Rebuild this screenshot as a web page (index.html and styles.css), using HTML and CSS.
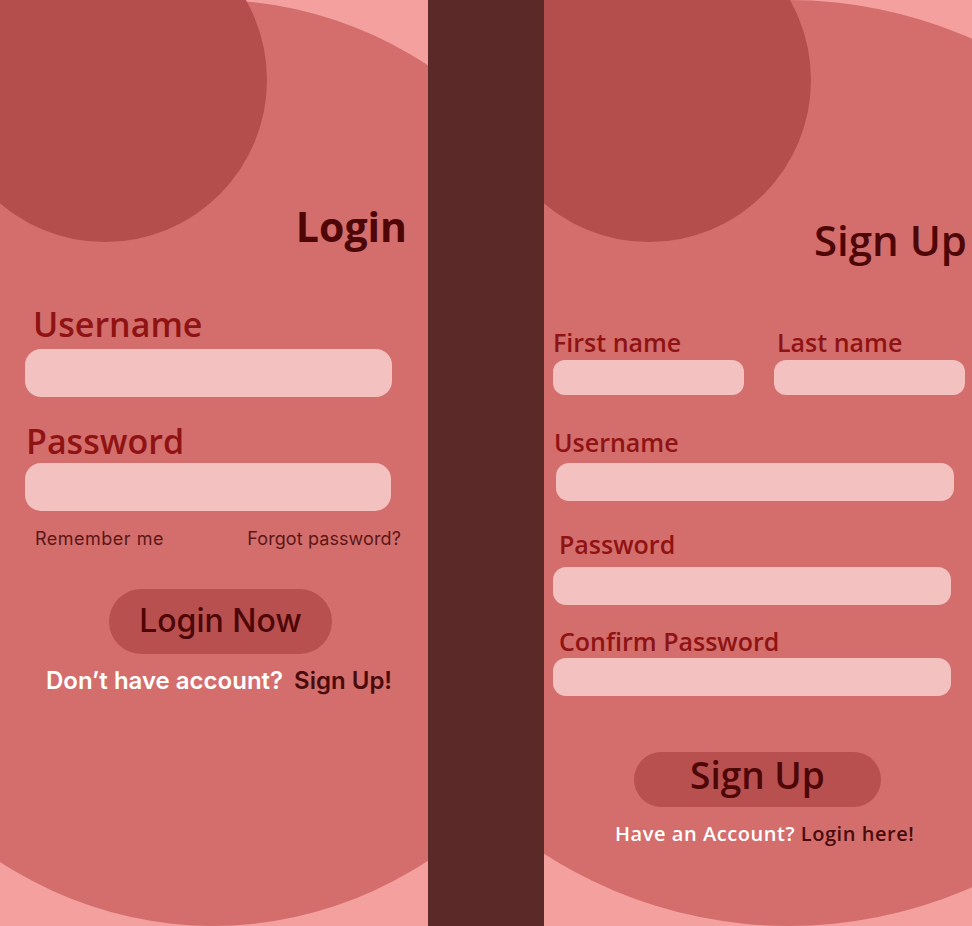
FILE: index.html
```html
<!DOCTYPE html>
<html lang="en">
<head>
<meta charset="utf-8">
<title>Login / Sign Up</title>
<link rel="stylesheet" href="styles.css">
</head>
<body>
<div class="screens">
  <section class="panel panel-login">
    <div class="blob blob-login"></div>
    <div class="dot"></div>
    <form class="content">
      <h1 class="title login-title">Login</h1>
      <label class="big-label lbl-user">Username</label>
      <input class="field field-user" type="text">
      <label class="big-label lbl-pass">Password</label>
      <input class="field field-pass" type="password">
      <div class="options">
        <span>Remember me</span>
        <span>Forgot password?</span>
      </div>
      <button type="button" class="btn btn-login">Login Now</button>
      <p class="alt alt-login"><span class="light">Don’t have account?</span><span class="dark">Sign Up!</span></p>
    </form>
  </section>

  <div class="divider"></div>

  <section class="panel panel-signup">
    <div class="blob blob-signup"></div>
    <div class="dot"></div>
    <form class="content">
      <h1 class="title signup-title">Sign Up</h1>
      <div class="names">
        <div class="name-col name-first">
          <label class="small-label">First name</label>
          <input class="field field-name" type="text">
        </div>
        <div class="name-col name-last">
          <label class="small-label lbl-last">Last name</label>
          <input class="field field-name" type="text">
        </div>
      </div>
      <label class="small-label s-user">Username</label>
      <input class="field field-wide f-user" type="text">
      <label class="small-label s-pass">Password</label>
      <input class="field field-wide f-pass" type="password">
      <label class="small-label s-confirm">Confirm Password</label>
      <input class="field field-wide f-confirm" type="password">
      <button type="button" class="btn btn-signup">Sign Up</button>
      <p class="alt alt-signup"><span class="light">Have an Account?</span> <span class="dark">Login here!</span></p>
    </form>
  </section>
</div>
</body>
</html>
```

FILE: styles.css
```css
* { box-sizing: border-box; }
html, body { margin: 0; padding: 0; }
body { width: 972px; height: 926px; overflow: hidden; background: #f3a09f; }

.screens { display: flex; width: 972px; height: 926px; }

.panel {
  position: relative;
  width: 428px;
  height: 926px;
  flex: 0 0 428px;
  overflow: hidden;
  background: #f3a09f;
}
.divider { flex: 0 0 116px; height: 926px; background: #5c2929; }

.blob { position: absolute; top: 0; height: 926px; border-radius: 50%; background: #d36e6d; }
.blob-login { left: -207px; width: 840px; }
.blob-signup { left: -212px; width: 914px; }
.dot {
  position: absolute;
  left: -57px; top: -82px;
  width: 324px; height: 324px;
  border-radius: 50%;
  background: #b44e4d;
}

.content { position: relative; z-index: 1; display: flex; flex-direction: column; align-items: flex-start; margin: 0; }
.panel-login .content { padding-top: 202px; }
.panel-signup .content { padding-top: 215px; }

.title { margin: 0; align-self: stretch; text-align: right; color: #4e0606; font-family: "Open Sans", sans-serif; }
.login-title { font-size: 41px; line-height: 48px; font-weight: 700; padding-right: 21px; }
.signup-title { font-size: 42px; line-height: 50px; font-weight: 600; padding-right: 5px; }

.big-label, .small-label { display: block; color: #8f1313; font-family: "Open Sans", sans-serif; font-weight: 600; }
.big-label { font-size: 34px; line-height: 40px; }
.small-label { font-size: 25px; line-height: 30px; }

.field {
  display: block;
  border: 0;
  outline: none;
  padding: 0;
  background: #f2c1c0;
  -webkit-appearance: none;
  appearance: none;
}

.lbl-user { margin-top: 54px; padding-left: 33px; }
.field-user { margin: 5px 0 0 25px; width: 367px; height: 48px; border-radius: 16px; }
.lbl-pass { margin-top: 24px; padding-left: 26px; }
.field-pass { margin: 2px 0 0 25px; width: 366px; height: 48px; border-radius: 16px; }

.options {
  align-self: stretch;
  display: flex;
  justify-content: space-between;
  margin-top: 17px;
  padding: 0 27px 0 35px;
  font-family: "Inter", sans-serif;
  font-size: 18px;
  line-height: 22px;
  color: #5c1616;
}
.options span:first-child { letter-spacing: 0.5px; }
.options span:last-child { letter-spacing: 0.1px; }

.btn {
  display: flex;
  align-items: center;
  justify-content: center;
  border: 0;
  padding: 0;
  border-radius: 40px;
  background: #b85050;
  color: #4e0606;
  cursor: pointer;
}
.btn-login { margin: 39px 0 0 109px; width: 223px; height: 65px; font-family: "Inter", sans-serif; font-weight: 500; font-size: 32px; padding-bottom: 2px; }
.btn-signup { margin: 56px 0 0 90px; width: 247px; height: 55px; font-family: "Open Sans", sans-serif; font-weight: 600; font-size: 37px; border-radius: 28px; padding-bottom: 10px; }

.alt { margin: 0; white-space: nowrap; }
.alt .light { color: #ffffff; }
.alt .dark { color: #4a0b0b; }
.alt-login {
  margin-top: 13px;
  padding-left: 46px;
  display: flex;
  gap: 11px;
  font-family: "Inter", sans-serif;
  font-weight: 600;
  font-size: 24px;
  line-height: 28px;
}
.alt-signup {
  margin-top: 15px;
  padding-left: 71px;
  font-family: "Open Sans", sans-serif;
  font-weight: 600;
  font-size: 20px;
  letter-spacing: 0.55px;
  line-height: 24px;
}

.names { display: flex; margin-top: 62px; }
.name-col { display: flex; flex-direction: column; width: 191px; }
.name-first { margin-left: 9px; }
.name-last { margin-left: 30px; }
.lbl-last { padding-left: 3px; }
.field-name { margin-top: 3px; width: 191px; height: 35px; border-radius: 12px; }

.field-wide { width: 398px; height: 38px; border-radius: 13px; }
.s-user { margin-top: 32px; padding-left: 10px; }
.f-user { margin: 6px 0 0 12px; }
.s-pass { margin-top: 28px; padding-left: 15px; }
.f-pass { margin: 8px 0 0 9px; }
.s-confirm { margin-top: 21px; padding-left: 15px; }
.f-confirm { margin: 2px 0 0 9px; }
```
